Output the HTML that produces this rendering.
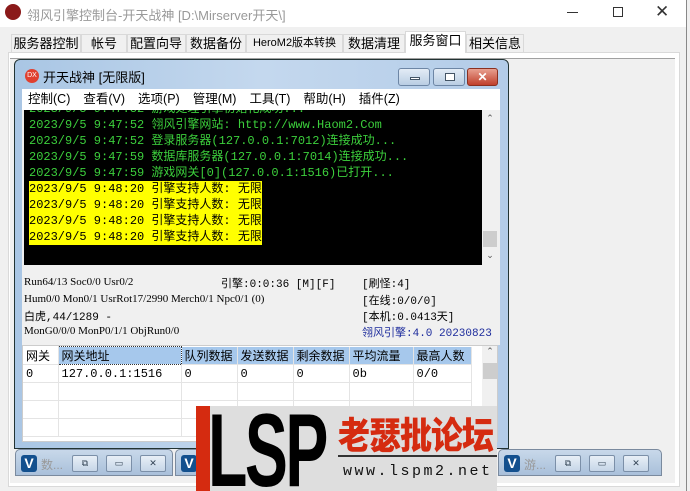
<!DOCTYPE html>
<html><head><meta charset="utf-8"><style>
*{margin:0;padding:0;box-sizing:border-box}
html,body{width:690px;height:491px;overflow:hidden}
body{background:#f0f0f0;position:relative;font-family:"Liberation Sans","Noto Sans CJK SC",sans-serif;font-size:12px;color:#000}
.a{position:absolute}
.mono{font-family:"Liberation Mono","Noto Sans CJK SC",monospace}
.tab{position:absolute;top:34px;height:18px;border:1px solid #d9d9d9;border-bottom:none;background:#f0f0f0;font-size:13px;line-height:17px;text-align:center;white-space:nowrap}
.btn{position:absolute;border:1px solid #6d86a5;border-radius:3px;background:linear-gradient(#e3ecf6,#b9cde3)}
.log div{height:16px;line-height:16px;white-space:pre;font-size:12px;color:#3ccf3c}
.log .y{background:#ffff00;color:#000;display:inline-block}
.mini{position:absolute;top:449px;height:27px;border:1px solid #7a8a9e;border-radius:5px 5px 0 0;background:linear-gradient(#c8d8ea,#a9c0da)}
.mb{position:absolute;top:5px;width:26px;height:17px;border:1px solid #7b8fa8;border-radius:2px;background:linear-gradient(#e8eff7,#c6d6e8);font-size:9px;text-align:center;line-height:15px;color:#345}
.vic{position:absolute;top:5px;left:5px;width:16px;height:17px;background:#13508e;border-radius:3px;color:#fff;font-weight:bold;font-size:14px;line-height:17px;text-align:center}
.grid{table-layout:fixed}
.grid td{border-right:1px solid #e4e4e4;border-bottom:1px solid #e4e4e4;height:18px;padding-left:3px;font-size:12px;white-space:nowrap;overflow:hidden}
</style></head><body>
<div class="a" style="left:0;top:0;width:687px;height:491px;background:#f0f0f0;border-right:1px solid #888"></div>
<div class="a" style="left:0;top:0;width:686px;height:27px;background:#fff"></div>
<div class="a" style="left:5px;top:4px;width:16px;height:16px;border-radius:50%;background:#8b1a1a"></div>
<div class="a" style="left:27px;top:5px;font-size:13px;color:#999">翎风引擎控制台-开天战神 [D:\Mirserver开天\]</div>
<div class="a" style="left:567px;top:12px;width:11px;height:1px;background:#333"></div>
<div class="a" style="left:613px;top:7px;width:10px;height:10px;border:1px solid #333"></div>
<div class="a" style="left:655px;top:2px;font-size:17px;color:#333">✕</div>
<div class="tab" style="left:11px;width:70px">服务器控制</div>
<div class="tab" style="left:81px;width:46px">帐号</div>
<div class="tab" style="left:127px;width:59px;text-align:right;padding-right:3px">配置向导</div>
<div class="tab" style="left:186px;width:60px">数据备份</div>
<div class="tab" style="left:246px;width:97px;font-size:11px">HeroM2版本转换</div>
<div class="tab" style="left:343px;width:62px">数据清理</div>
<div class="tab" style="left:405px;width:61px;top:31px;height:22px;background:#fff;z-index:2">服务窗口</div>
<div class="tab" style="left:466px;width:58px">相关信息</div>
<div class="a" style="left:8px;top:52px;width:672px;height:435px;background:#fff;border:1px solid #d9d9d9"></div>
<div class="a" style="left:10px;top:58px;width:665px;height:425px;background:#f0f0f0;border-top:1px solid #a0a0a0"></div>
<div class="a" style="left:14px;top:59px;width:495px;height:390px;border:1px solid #233;border-radius:6px 6px 0 0;background:linear-gradient(90deg,#a9c6e4,#c4d8ee 50%,#b3cce8)"></div>
<div class="a" style="left:25px;top:69px;width:14px;height:14px;border-radius:50%;background:#e04030;color:#fff;font-size:7px;text-align:center;line-height:14px">DX</div>
<div class="a" style="left:43px;top:67px;font-size:13px">开天战神 [无限版]</div>
<div class="btn" style="left:398px;top:68px;width:32px;height:18px"><div class="a" style="left:11px;top:8px;width:10px;height:3px;background:#fff;border:1px solid #456"></div></div>
<div class="btn" style="left:433px;top:68px;width:32px;height:18px"><div class="a" style="left:11px;top:4px;width:10px;height:8px;border:1px solid #456;background:#fff"></div></div>
<div class="btn" style="left:467px;top:68px;width:31px;height:18px;background:linear-gradient(#e8a090,#c0402c);border-color:#8a3020;color:#fff;text-align:center;font-weight:bold;line-height:16px">✕</div>
<div class="a" style="left:22px;top:89px;width:478px;height:21px;background:#fff;font-size:12.5px;line-height:21px">
<span style="margin-left:6px">控制(C)</span><span style="margin-left:13px">查看(V)</span><span style="margin-left:13px">选项(P)</span><span style="margin-left:13px">管理(M)</span><span style="margin-left:13px">工具(T)</span><span style="margin-left:13px">帮助(H)</span><span style="margin-left:13px">插件(Z)</span></div>
<div class="a" style="left:22px;top:110px;width:478px;height:158px;background:#f0f0f0"></div>
<div class="a log mono" style="left:24px;top:110px;width:458px;height:155px;background:#000;overflow:hidden;padding-left:5px">
<div style="margin-top:-9px">2023/9/5 9:47:52 游戏处理引擎初始化成功...</div>
<div>2023/9/5 9:47:52 翎风引擎网站: http://www.Haom2.Com</div>
<div>2023/9/5 9:47:52 登录服务器(127.0.0.1:7012)连接成功...</div>
<div>2023/9/5 9:47:59 数据库服务器(127.0.0.1:7014)连接成功...</div>
<div>2023/9/5 9:47:59 游戏网关[0](127.0.0.1:1516)已打开...</div>
<div><span class="y">2023/9/5 9:48:20 引擎支持人数: 无限</span></div>
<div><span class="y">2023/9/5 9:48:20 引擎支持人数: 无限</span></div>
<div><span class="y">2023/9/5 9:48:20 引擎支持人数: 无限</span></div>
<div><span class="y">2023/9/5 9:48:20 引擎支持人数: 无限</span></div>
</div>
<div class="a" style="left:482px;top:110px;width:16px;height:155px;background:#f0f0f0;font-size:9px;text-align:center;color:#555">
<div style="margin-top:3px">⌃</div><div class="a" style="left:1px;top:121px;width:14px;height:16px;background:#cdcdcd"></div><div class="a" style="left:0;top:140px;width:16px">⌄</div></div>
<div class="a" style="left:22px;top:268px;width:478px;height:77px;background:#f0f0f0;font-size:11px">
<div class="a" style="left:2px;top:8px;font-family:'Liberation Serif',serif">Run64/13 Soc0/0 Usr0/2</div>
<div class="a mono" style="left:199px;top:7px">引擎:0:0:36 [M][F]</div>
<div class="a mono" style="left:340px;top:7px">[刷怪:4]</div>
<div class="a" style="left:2px;top:25px;font-family:'Liberation Serif',serif">Hum0/0 Mon0/1 UsrRot17/2990 Merch0/1 Npc0/1 (0)</div>
<div class="a mono" style="left:340px;top:24px">[在线:0/0/0]</div>
<div class="a mono" style="left:2px;top:40px">白虎,44/1289 -</div>
<div class="a mono" style="left:340px;top:40px">[本机:0.0413天]</div>
<div class="a" style="left:2px;top:57px;font-family:'Liberation Serif',serif">MonG0/0/0 MonP0/1/1 ObjRun0/0</div>
<div class="a mono" style="left:340px;top:56px;color:#1c2b9c">翎风引擎:4.0 20230823</div>
</div>
<div class="a" style="left:22px;top:345px;width:476px;height:97px;background:#fff;border:1px solid #ccc;overflow:hidden">
<table class="grid" style="border-collapse:collapse;position:absolute;left:0;top:0;width:448px">
<colgroup><col style="width:35px"><col style="width:123px"><col style="width:56px"><col style="width:56px"><col style="width:56px"><col style="width:64px"><col style="width:58px"></colgroup>
<tr style="font-size:13px"><td style="background:#fff">网关</td><td style="background:#a6c8ec;border:1px dotted #333">网关地址</td><td style="background:#a6c8ec">队列数据</td><td style="background:#a6c8ec">发送数据</td><td style="background:#a6c8ec">剩余数据</td><td style="background:#a6c8ec">平均流量</td><td style="background:#a6c8ec">最高人数</td></tr>
<tr class="mono"><td>0</td><td>127.0.0.1:1516</td><td>0</td><td>0</td><td>0</td><td>0b</td><td>0/0</td></tr>
<tr><td></td><td></td><td></td><td></td><td></td><td></td><td></td></tr>
<tr><td></td><td></td><td></td><td></td><td></td><td></td><td></td></tr>
<tr><td></td><td></td><td></td><td></td><td></td><td></td><td></td></tr>
</table>
<div class="a" style="left:459px;top:0;width:16px;height:97px;background:#f0f0f0;font-size:9px;text-align:center;color:#555">⌃<div class="a" style="left:1px;top:17px;width:14px;height:16px;background:#cdcdcd"></div></div>
</div>
<div class="mini" style="left:15px;width:158px"><div class="vic">V</div><span class="a" style="left:25px;top:6px;color:#999">数...</span><div class="mb" style="left:56px">⧉</div><div class="mb" style="left:90px">▭</div><div class="mb" style="left:124px">✕</div></div>
<div class="mini" style="left:175px;width:40px"><div class="vic">V</div></div>
<div class="mini" style="left:498px;width:164px"><div class="vic">V</div><span class="a" style="left:25px;top:6px;color:#999">游...</span><div class="mb" style="left:56px">⧉</div><div class="mb" style="left:90px">▭</div><div class="mb" style="left:124px">✕</div></div>
<div class="a" style="left:196px;top:406px;width:301px;height:85px;background:#dedede;overflow:hidden">
<div class="a" style="left:0;top:0;width:14px;height:85px;background:#d52b10"></div>
<div class="a" style="left:12px;top:-2px;font-family:'Liberation Sans',sans-serif;font-weight:bold;font-size:104px;line-height:95px;letter-spacing:-4px;transform:scaleX(0.62);transform-origin:left;color:#000">LSP</div>
<div class="a" style="left:142px;top:2px;font-family:'Noto Sans CJK SC',sans-serif;font-weight:900;font-size:32px;line-height:44px;color:#d52b10;letter-spacing:-1px;transform:scaleY(1.15);transform-origin:top">老瑟批论坛</div>
<div class="a" style="left:142px;top:49px;width:159px;height:2px;background:#333"></div>
<div class="a" style="left:147px;top:57px;font-family:'Liberation Mono',monospace;font-size:15px;letter-spacing:2.5px;color:#111">www.lspm2.net</div>
</div>
</body></html>
